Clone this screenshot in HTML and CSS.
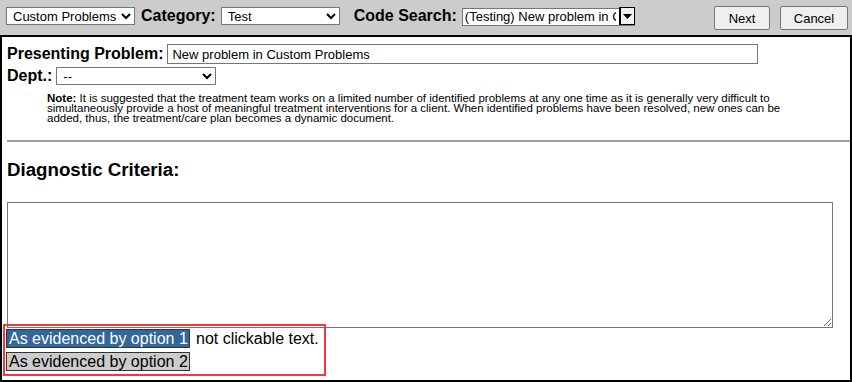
FILE: index.html
```html
<!DOCTYPE html>
<html>
<head>
<meta charset="utf-8">
<link rel="stylesheet" href="styles.css">
</head>
<body>
<div class="page">
  <div class="toolbar">
    <select class="sel sel-type"><option>Custom Problems</option></select>
    <span class="tlabel">Category:</span>
    <select class="sel sel-cat"><option>Test</option></select>
    <span class="tlabel tlabel-code">Code Search:</span>
    <span class="codewrap">
      <select class="sel sel-code"><option>(Testing) New problem in Custom Problems</option></select>
      <span class="codearrow"><svg width="9" height="5" viewBox="0 0 9 5"><path d="M0 0H9L4.5 5Z" fill="#000"/></svg></span>
    </span>
    <span class="spacer"></span>
    <button class="btn btn-next">Next</button>
    <button class="btn btn-cancel">Cancel</button>
  </div>
  <div class="content">
    <div class="row row-problem">
      <span class="flabel">Presenting Problem:</span>
      <input class="txt" type="text" value="New problem in Custom Problems">
    </div>
    <div class="row row-dept">
      <span class="flabel">Dept.:</span>
      <select class="sel sel-dept"><option>--</option></select>
    </div>
    <p class="note"><b>Note:</b> It is suggested that the treatment team works on a limited number of identified problems at any one time as it is generally very difficult to simultaneously provide a host of meaningful treatment interventions for a client. When identified problems have been resolved, new ones can be added, thus, the treatment/care plan becomes a dynamic document.</p>
    <hr class="rule">
    <h2 class="heading">Diagnostic Criteria:</h2>
    <textarea class="area"></textarea>
    <div class="options">
      <div class="optrow"><span class="opt opt-on">As evidenced by option 1</span><span class="plain">not clickable text.</span></div>
      <div class="optrow"><span class="opt opt-off">As evidenced by option 2</span></div>
      <div class="redbox"></div>
    </div>
  </div>
</div>
</body>
</html>
```
FILE: styles.css
```css
html, body {
  margin: 0;
  padding: 0;
  background: #fff;
}
body {
  font-family: "Liberation Sans", Arial, sans-serif;
  color: #000;
}
.page {
  width: 852px;
  height: 382px;
  box-sizing: border-box;
  display: flex;
  flex-direction: column;
  overflow: hidden;
}
.toolbar {
  background: #cccccc;
  border-bottom: 2px solid #000;
  display: flex;
  align-items: flex-start;
  padding: 7px 0 0 6px;
  box-sizing: content-box;
  height: 28px;
}
.sel {
  font-family: "Liberation Sans", Arial, sans-serif;
  font-size: 13px;
  height: 18px;
  padding: 0 0 0 2px;
  border: 1px solid #767676;
  border-radius: 0;
  background: #fff;
  color: #000;
  box-sizing: border-box;
}
.sel-type { width: 129px; }
.sel-cat { width: 119px; }
.tlabel {
  font-weight: bold;
  font-size: 16px;
  line-height: 18px;
  margin: 0 5px 0 6px;
}
.tlabel-code { margin-left: 14px; }
.codewrap {
  position: relative;
  display: inline-block;
  width: 173px;
  height: 18px;
}
.sel-code {
  width: 173px;
  -webkit-appearance: none;
  appearance: none;
  padding-right: 18px;
}
.codearrow {
  position: absolute;
  right: 1px;
  top: 1px;
  width: 14px;
  height: 16px;
  background: #f0f0f0;
  border-left: 1px solid #000;
  box-sizing: border-box;
  display: flex;
  align-items: center;
  justify-content: center;
  outline: 1px solid #000;
}
.spacer { flex: 1; }
.btn {
  font-family: "Liberation Sans", Arial, sans-serif;
  font-size: 13px;
  height: 24px;
  margin-top: -1px;
  background: #efefef;
  border: 1px solid #767676;
  border-radius: 2px;
  color: #000;
  padding: 0;
}
.btn-next { width: 56px; margin-right: 10px; }
.btn-cancel { width: 68px; margin-right: 4px; }
.content {
  flex: 1;
  border-left: 2px solid #000;
  border-right: 2px solid #000;
  border-bottom: 2px solid #000;
  padding: 7px 0 0 5px;
  position: relative;
}
.row {
  display: flex;
  align-items: center;
}
.flabel {
  font-weight: bold;
  font-size: 16px;
  margin-right: 5px;
}
.row-problem { height: 20px; }
.txt {
  width: 591px;
  height: 20px;
  box-sizing: border-box;
  border: 1px solid #767676;
  font-family: "Liberation Sans", Arial, sans-serif;
  font-size: 13px;
  padding: 0 4px;
  margin: 0 0 0 -1px;
}
.row-dept { margin-top: 3px; height: 18px; }
.sel-dept { width: 160px; margin-left: -1px; }
.note {
  margin: 8px 0 0 40px;
  width: 745px;
  font-size: 11.5px;
  line-height: 10px;
}
.rule {
  margin: 17px 0 0 0;
  border: 0;
  border-top: 2px solid #a0a0a0;
  height: 0;
}
.heading {
  margin: 17px 0 0 0;
  font-size: 18.7px;
  line-height: 21px;
}
.area {
  display: block;
  margin-top: 22px;
  width: 826px;
  height: 126px;
  box-sizing: border-box;
  border: 1px solid #767676;
  resize: both;
}
.options {
  position: relative;
  margin-top: 1px;
}
.optrow {
  display: flex;
  align-items: center;
  height: 19px;
  margin-bottom: 4px;
  margin-left: -1px;
}
.opt {
  display: inline-block;
  box-sizing: border-box;
  width: 184px;
  height: 19px;
  line-height: 17px;
  font-size: 16px;
  padding: 0 2px;
  border: 1px solid #333;
  white-space: nowrap;
}
.opt-on { background: #336699; color: #fff; }
.opt-off { background: #cccccc; color: #000; }
.plain {
  font-size: 16px;
  margin-left: 6px;
}
.redbox {
  position: absolute;
  left: -4px;
  top: -5px;
  width: 323px;
  height: 52px;
  border: 2px solid #ee3b3b;
  box-sizing: border-box;
}
```
